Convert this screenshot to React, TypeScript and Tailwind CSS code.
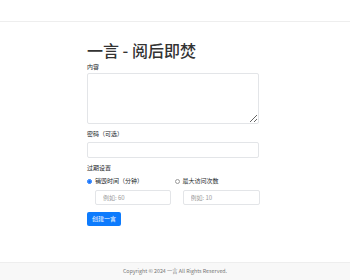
export default function App() {
  const font = { fontFamily: '"Noto Sans CJK SC", "Noto Sans", sans-serif' };
  return (
    <div className="flex h-[280px] w-[350px] flex-col bg-white text-[#212529]" style={font}>
      <header className="h-[22px] shrink-0 border-b border-[#eeeeee] bg-white"></header>

      <main className="ml-[87px] w-[172px] flex-1 pt-[18px]">
        <h1 className="text-[16px] leading-[20px] font-medium text-[#333333]">一言 - 阅后即焚</h1>

        <div className="mt-[3px]">
          <label className="block text-[6px] leading-[8px]">内容</label>
          <textarea className="mt-[2px] block h-[51px] w-full resize-y rounded-[2px] border border-[#e3e5e8] bg-white"></textarea>
        </div>

        <div className="mt-[6px]">
          <label className="block text-[6px] leading-[8px]">密码（可选）</label>
          <input type="password" className="mt-[4px] block h-[16px] w-full rounded-[2px] border border-[#e3e5e8] bg-white" />
        </div>

        <div className="mt-[6px]">
          <label className="block text-[6px] leading-[8px]">过期设置</label>
          <div className="mt-[4px] grid grid-cols-2 gap-[3px]">
            <div>
              <div className="flex items-center text-[6px] leading-[10px]">
                <span className="flex h-[5px] w-[5px] items-center justify-center rounded-full border border-[#0d6efd]">
                  <span className="h-[3px] w-[3px] rounded-full bg-[#0d6efd]"></span>
                </span>
                <span className="ml-[3px]">销毁时间（分钟）</span>
              </div>
              <input
                placeholder="例如: 60"
                className="mt-[4px] ml-[8px] block h-[15px] w-[76px] rounded-[2px] border border-[#e3e5e8] px-[7px] text-[6px] placeholder:text-[#9a9a9a]"
              />
            </div>
            <div>
              <div className="flex items-center text-[6px] leading-[10px]">
                <span className="h-[5px] w-[5px] rounded-full border border-[#9a9a9a]"></span>
                <span className="ml-[3px]">最大访问次数</span>
              </div>
              <input
                placeholder="例如: 10"
                className="mt-[4px] ml-[8px] block h-[15px] w-[77px] rounded-[2px] border border-[#e3e5e8] px-[7px] text-[6px] placeholder:text-[#9a9a9a]"
              />
            </div>
          </div>
        </div>

        <button className="mt-[7px] block h-[14px] w-[34px] rounded-[2px] bg-[#0d7bfd] text-[6px] leading-[14px] text-white">
          创建一言
        </button>
      </main>

      <footer className="h-[18px] shrink-0 border-t border-[#eeeeee] bg-[#f8f8f8] text-center text-[5.3px] leading-[17px] text-[#777777]">
        Copyright © 2024 一言 All Rights Reserved.
      </footer>
    </div>
  );
}
